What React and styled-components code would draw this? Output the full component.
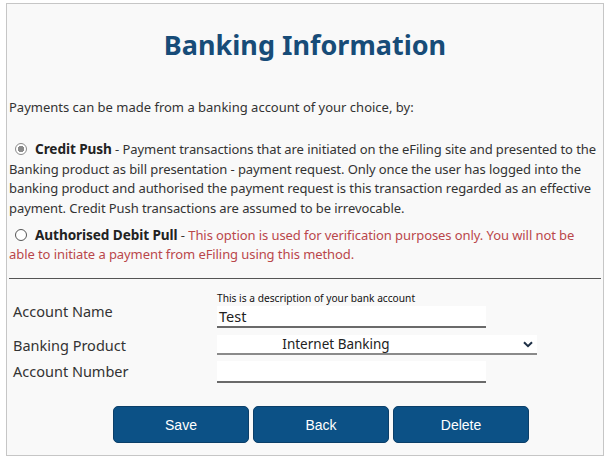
import React from "react";
import styled, { createGlobalStyle } from "styled-components";

const Global = createGlobalStyle`
  html, body { margin: 0; padding: 0; background: #ffffff; }
  body { padding: 3px 0 0 6px; font-family: "Noto Sans", "Open Sans", sans-serif; }
`;

const Panel = styled.div`
  box-sizing: border-box;
  width: 598px;
  height: 453px;
  border: 1px solid #c6c6c6;
  background: #f9f9f9;
  padding: 0 2px;
  color: #333;
`;

const Title = styled.h1`
  margin: 0;
  padding-top: 23px;
  height: 47px;
  text-align: center;
  font-size: 27px;
  font-weight: 700;
  color: #174c78;
  line-height: 36px;
`;

const Intro = styled.p`
  margin: 0;
  padding-top: 24px;
  font-size: 13px;
  line-height: 19px;
`;

const Options = styled.div`
  display: flex;
  flex-direction: column;
  gap: 8px;
  padding-top: 22px;
`;

const Option = styled.p`
  margin: 0;
  font-size: 13px;
  line-height: ${(p) => p.$lh || 19.5}px;
  letter-spacing: -0.08px;
  color: #333;
`;

const Radio = styled.span`
  display: inline-block;
  box-sizing: border-box;
  width: 12px;
  height: 12px;
  border-radius: 50%;
  border: 1px solid ${(p) => (p.$checked ? "#8a8a8a" : "#555")};
  margin: 0 8px -1px 6px;
  background: ${(p) =>
    p.$checked ? "radial-gradient(circle, #8a8a8a 0 3px, #fff 3.5px)" : "#fff"};
`;

const Strong = styled.b`
  font-weight: 700;
  color: #222;
  font-size: 13.6px;
`;

const Warn = styled.span`
  color: #b9474b;
`;

const Rule = styled.hr`
  margin: 15px 0 0 0;
  border: none;
  border-top: 1px solid #555;
`;

const Form = styled.div`
  display: flex;
  flex-direction: column;
  padding: 12px 0 0 4px;
`;

const Row = styled.div`
  display: grid;
  grid-template-columns: 204px 1fr;
  align-items: end;
  height: ${(p) => p.$h}px;
`;

const Label = styled.div`
  font-size: 14.5px;
  color: #333;
  line-height: 20px;
  padding-bottom: ${(p) => p.$pb || 0}px;
`;

const FieldCol = styled.div`
  display: flex;
  flex-direction: column;
`;

const Hint = styled.div`
  font-size: 10.2px;
  color: #111;
  line-height: 14px;
  margin-bottom: 1px;
`;

const Input = styled.div`
  box-sizing: border-box;
  width: ${(p) => p.$w}px;
  height: 22px;
  background: #fff;
  border-bottom: 2px solid #6a6a6a;
  font-size: 14.5px;
  line-height: 20px;
  padding-left: 2px;
  color: #222;
`;

const Select = styled.div`
  box-sizing: border-box;
  width: 320px;
  height: 20px;
  background: #fff;
  border-bottom: 2px solid #8a8a8a;
  font-size: 13.5px;
  line-height: 18px;
  color: #222;
  position: relative;
  text-align: center;
  padding-right: 82px;
`;

const Chevron = styled.svg`
  position: absolute;
  right: 4px;
  top: 6px;
`;

const Buttons = styled.div`
  display: flex;
  gap: 4px;
  padding: 23px 0 0 104px;
`;

const Button = styled.button`
  width: 136px;
  height: 37px;
  border: 1px solid #0b3f69;
  border-radius: 5px;
  background: #0c5186;
  color: #fff;
  font-family: "Liberation Sans", Arial, sans-serif;
  font-size: 14px;
  padding: 0;
`;

export default function App() {
  return (
    <>
      <Global />
      <Panel>
        <Title>Banking Information</Title>
        <Intro>Payments can be made from a banking account of your choice, by:</Intro>
        <Options>
          <Option>
            <Radio $checked />
            <Strong>Credit Push</Strong> - Payment transactions that are initiated on the eFiling
            site and presented to the Banking product as bill presentation - payment request. Only
            once the user has logged into the banking product and authorised the payment request is
            this transaction regarded as an effective payment. Credit Push transactions are assumed
            to be irrevocable.
          </Option>
          <Option $lh={18.5}>
            <Radio />
            <Strong>Authorised Debit Pull</Strong> -{" "}
            <Warn>
              This option is used for verification purposes only. You will not be able to initiate a
              payment from eFiling using this method.
            </Warn>
          </Option>
        </Options>
        <Rule />
        <Form>
          <Row $h={37}>
            <Label $pb={7}>Account Name</Label>
            <FieldCol>
              <Hint>This is a description of your bank account</Hint>
              <Input $w={269}>Test</Input>
            </FieldCol>
          </Row>
          <Row $h={27}>
            <Label $pb={0}>Banking Product</Label>
            <Select>
              Internet Banking
              <Chevron width="10" height="7" viewBox="0 0 10 7">
                <path d="M1 1.2 L5 5.2 L9 1.2" fill="none" stroke="#1d2f45" strokeWidth="2" />
              </Chevron>
            </Select>
          </Row>
          <Row $h={28}>
            <Label $pb={2}>Account Number</Label>
            <Input $w={269} />
          </Row>
        </Form>
        <Buttons>
          <Button>Save</Button>
          <Button>Back</Button>
          <Button>Delete</Button>
        </Buttons>
      </Panel>
    </>
  );
}
